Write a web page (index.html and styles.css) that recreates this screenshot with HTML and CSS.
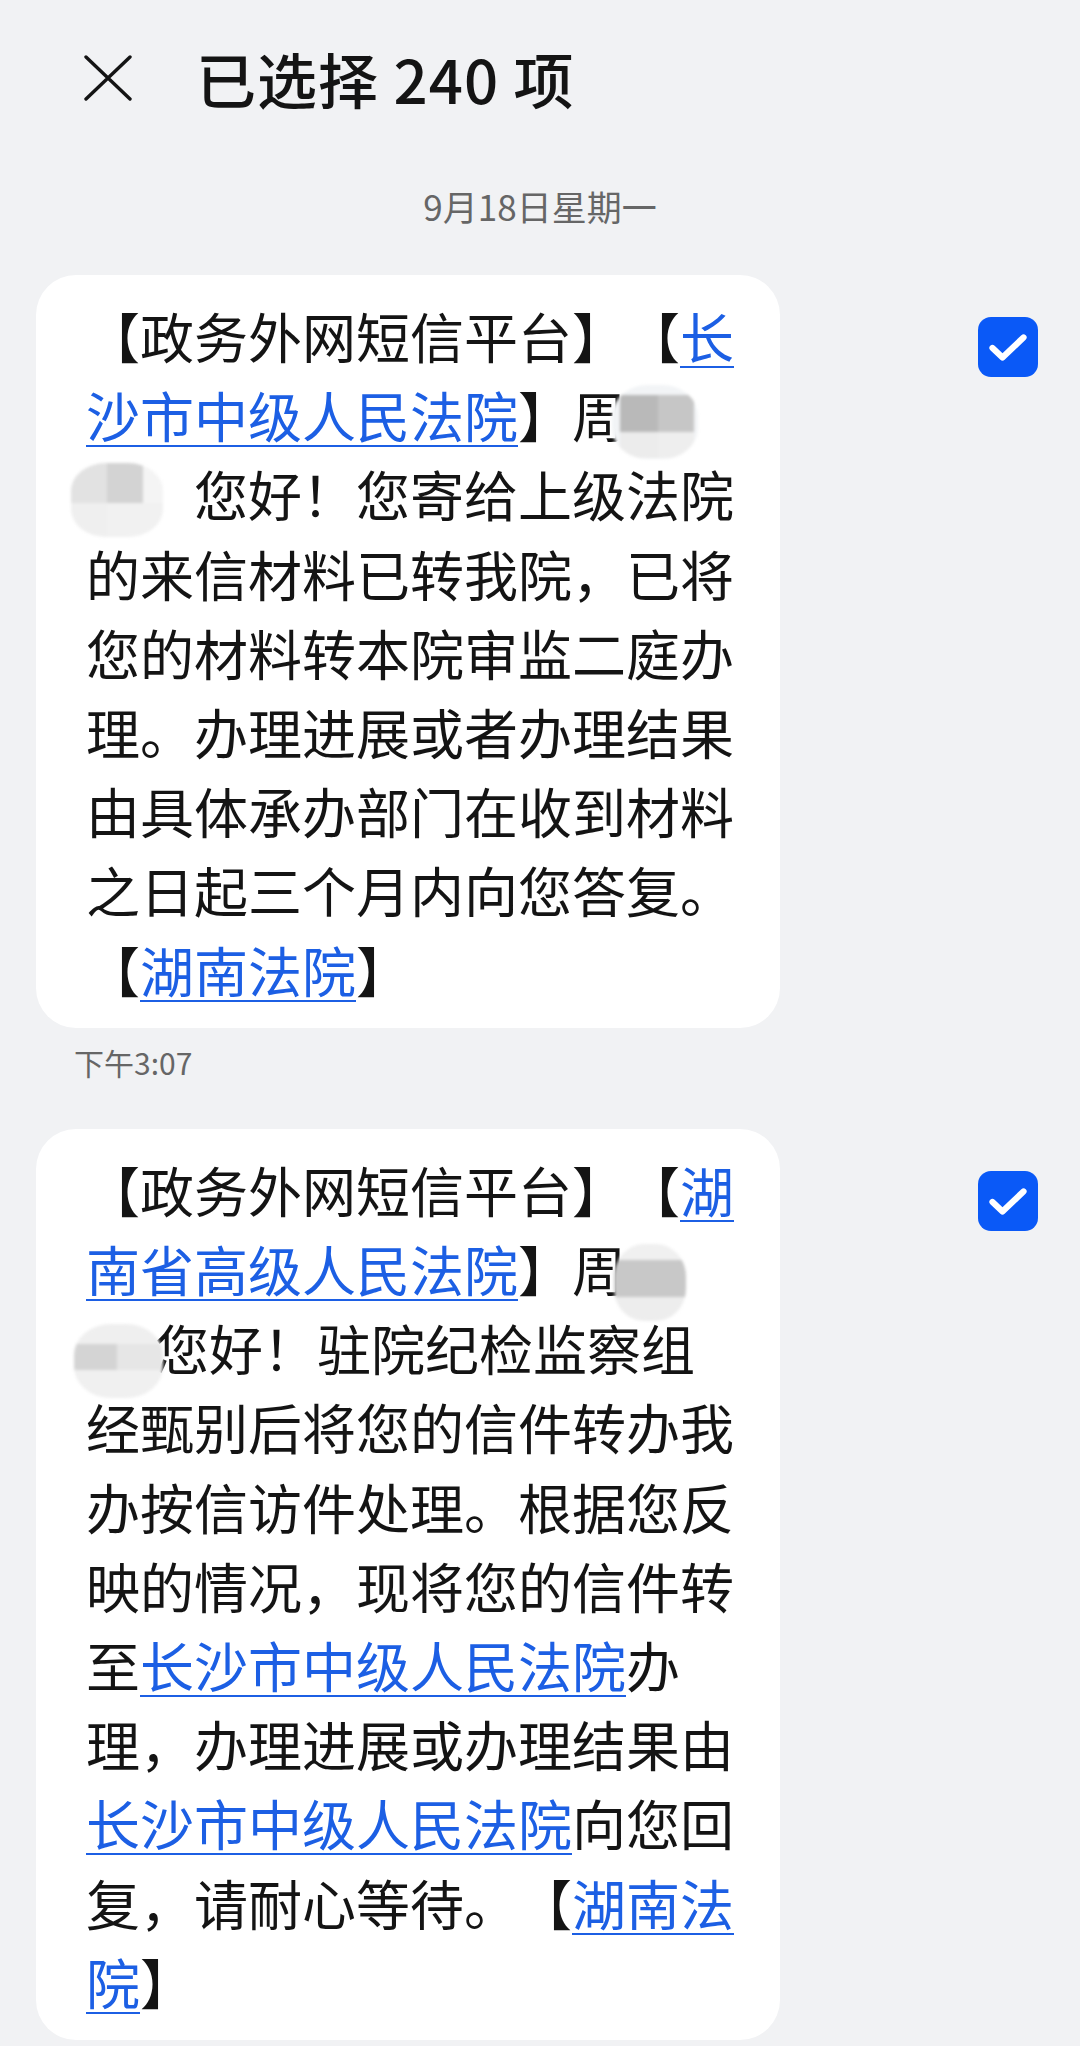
FILE: index.html
```html
<!DOCTYPE html>
<html lang="zh-CN">
<head>
<meta charset="utf-8">
<title>已选择 240 项</title>
<link rel="stylesheet" href="styles.css">
</head>
<body>
<div class="screen">
  <header class="topbar">
    <svg class="close-icon" viewBox="0 0 48 46" aria-hidden="true">
      <path d="M2 2 L46 44 M46 2 L2 44" stroke="#141414" stroke-width="3.4" stroke-linecap="round" fill="none"/>
    </svg>
    <h1 class="title">已选择 240 项</h1>
  </header>

  <div class="date">9月18日星期一</div>

  <div class="msg-row">
    <div class="bubble">
      <p class="msg-text">【政务外网短信平台】【<a class="link">长沙市中级人民法院</a>】周<span class="masked masked--a"></span><span class="keep"><span class="masked masked--b"></span>，</span>您好！您寄给上级法院的来信材料已转我院，已将您的材料转本院审监二庭办理。办理进展或者办理结果由具体承办部门在收到材料之日起三个月内向您答复。【<a class="link">湖南法院</a>】</p>
    </div>
    <div class="checkbox">
      <svg viewBox="0 0 60 60" aria-hidden="true"><path d="M14.5 31 L24.5 40.5 L45.5 20.5" stroke="#fff" stroke-width="6.2" stroke-linecap="round" stroke-linejoin="round" fill="none"/></svg>
    </div>
  </div>

  <div class="time">下午3:07</div>

  <div class="msg-row msg-row--second">
    <div class="bubble">
      <p class="msg-text">【政务外网短信平台】【<a class="link">湖南省高级人民法院</a>】周<span class="masked masked--c"></span><span class="keep"><span class="masked masked--d"></span>,</span>您好！驻院纪检监察组经甄别后将您的信件转办我办按信访件处理。根据您反映的情况，现将您的信件转至<a class="link">长沙市中级人民法院</a>办理，办理进展或办理结果由<a class="link">长沙市中级人民法院</a>向您回复，请耐心等待。【<a class="link">湖南法院</a>】</p>
    </div>
    <div class="checkbox">
      <svg viewBox="0 0 60 60" aria-hidden="true"><path d="M14.5 31 L24.5 40.5 L45.5 20.5" stroke="#fff" stroke-width="6.2" stroke-linecap="round" stroke-linejoin="round" fill="none"/></svg>
    </div>
  </div>
</div>
</body>
</html>
```

FILE: styles.css
```css
html, body {
  margin: 0;
  padding: 0;
  background: #f1f2f4;
}

.screen {
  width: 1080px;
  height: 2046px;
  overflow: hidden;
  background: #f1f2f4;
  font-family: "Noto Sans CJK SC", "Noto Sans", sans-serif;
  color: #141414;
}

.topbar {
  height: 156px;
  display: flex;
  align-items: center;
  padding-left: 84px;
}

.close-icon {
  width: 48px;
  height: 46px;
  flex: none;
}

.title {
  margin: 0 0 0 64px;
  font-size: 60px;
  font-weight: 500;
  line-height: 1;
  color: #141414;
  letter-spacing: 1px;
}

.date {
  margin-top: 26px;
  text-align: center;
  font-size: 35px;
  line-height: 48px;
  color: #666;
}

.msg-row {
  margin-top: 45px;
  display: flex;
  align-items: flex-start;
}

.msg-row--second {
  margin-top: 47px;
}

.bubble {
  margin-left: 36px;
  width: 744px;
  box-sizing: border-box;
  padding: 21px 40px 19px 50px;
  background: #ffffff;
  border-radius: 40px;
}

.msg-text {
  margin: 0;
  font-size: 54px;
  line-height: 79.2px;
  color: #141414;
  text-spacing-trim: space-all;
  line-break: strict;
}

.keep {
  white-space: nowrap;
}

.link {
  color: #1c5fe4;
  text-decoration: underline;
  text-decoration-thickness: 2px;
  text-underline-offset: 7px;
}

.masked {
  position: relative;
  display: inline-block;
  width: 1em;
  height: 1em;
  vertical-align: -0.12em;
}

.masked::before {
  content: "";
  position: absolute;
  left: -14px;
  top: -6px;
  width: 86px;
  height: 74px;
  border-radius: 42%;
  filter: blur(1.5px);
}

.masked--a::before {
  background:
    linear-gradient(#b9b9b9, #b9b9b9) 8px 10px / 38px 37px no-repeat,
    linear-gradient(#c6c6c6, #c6c6c6) 46px 10px / 36px 37px no-repeat,
    linear-gradient(#ececec, #ececec) 8px 47px / 38px 26px no-repeat,
    linear-gradient(#eeeeee, #eeeeee) 46px 47px / 36px 26px no-repeat,
    #f2f4f6;
}

.masked--b::before {
  left: -15px;
  top: -7px;
  width: 92px;
  height: 74px;
  border-radius: 38%;
  background:
    linear-gradient(#e2e2e2, #e2e2e2) 0 0 / 36px 40px no-repeat,
    linear-gradient(#d3d3d3, #d3d3d3) 36px 0 / 36px 40px no-repeat,
    linear-gradient(#efefef, #efefef) 0 40px / 36px 34px no-repeat,
    linear-gradient(#f1f1f1, #f1f1f1) 36px 40px / 56px 34px no-repeat,
    #f4f4f4;
}

.masked--c::before {
  left: -12px;
  top: -1px;
  width: 72px;
  height: 77px;
  background:
    linear-gradient(#f0f0f0, #f0f0f0) 0 0 / 72px 16px no-repeat,
    linear-gradient(#c8c8c8, #c8c8c8) 0 16px / 72px 37px no-repeat,
    linear-gradient(#ededed, #ededed) 0 53px / 72px 24px no-repeat,
    #efefef;
}

.masked--d::before {
  left: -12px;
  top: 0;
  width: 89px;
  height: 74px;
  background:
    linear-gradient(#efefef, #efefef) 0 0 / 89px 20px no-repeat,
    linear-gradient(#d4d4d4, #d4d4d4) 0 20px / 43px 26px no-repeat,
    linear-gradient(#e6e6e6, #e6e6e6) 43px 20px / 46px 26px no-repeat,
    linear-gradient(#f0f0f0, #f0f0f0) 0 46px / 89px 28px no-repeat,
    #f2f2f2;
}

.checkbox {
  margin: 42px 42px 0 auto;
  width: 60px;
  height: 60px;
  border-radius: 13px;
  background: #0a59f7;
  flex: none;
}

.checkbox svg {
  display: block;
  width: 60px;
  height: 60px;
}

.time {
  margin: 14px 0 0 74px;
  font-size: 30px;
  line-height: 40px;
  color: #666;
}
```
